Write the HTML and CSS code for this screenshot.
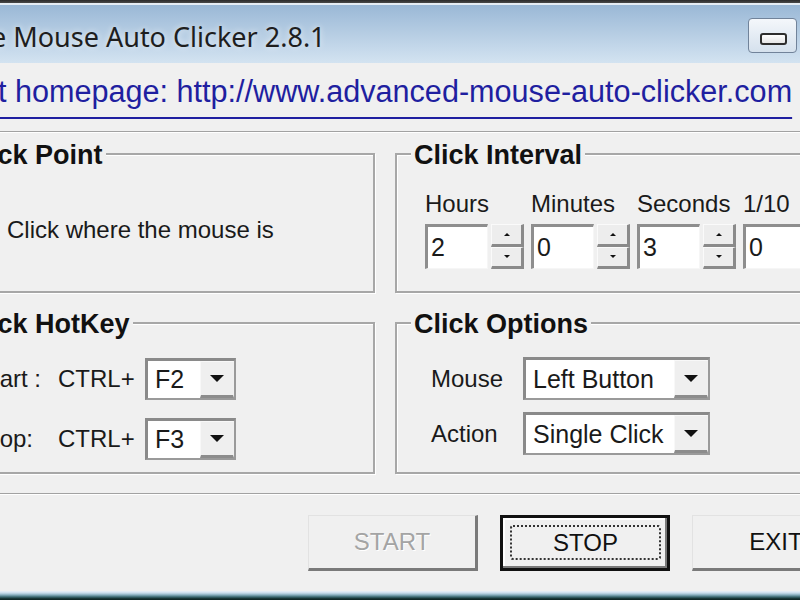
FILE: index.html
```html
<!DOCTYPE html>
<html>
<head>
<meta charset="utf-8">
<title>Advanced Mouse Auto Clicker 2.8.1</title>
<link rel="stylesheet" href="styles.css">
</head>
<body>
<div class="window">
  <div class="frame-top"></div>
  <div class="titlebar">
    <div class="title">e Mouse Auto Clicker 2.8.1</div>
    <div class="controls">
      <div class="cbtn min"><span class="min-glyph"></span></div>
      <div class="cbtn max"><span class="max-glyph"></span></div>
      <div class="cbtn close"><span class="close-glyph">✕</span></div>
    </div>
  </div>
  <div class="linkbar">
    <a class="homelink" href="#">t homepage: http://www.advanced-mouse-auto-clicker.com</a>
  </div>
  <div class="sep"></div>

  <div class="groups">
    <div class="group g-point">
      <div class="group-title">Click Point</div>
      <div class="option">Click where the mouse is</div>
    </div>

    <div class="group g-interval">
      <div class="group-title">Click Interval</div>
      <div class="spin-cols">
        <div class="spin-col">
          <div class="lbl">Hours</div>
          <div class="spin-row">
            <div class="num">2</div>
            <div class="spin"><div class="sbtn"><span class="up"></span></div><div class="sbtn"><span class="down"></span></div></div>
          </div>
        </div>
        <div class="spin-col">
          <div class="lbl">Minutes</div>
          <div class="spin-row">
            <div class="num">0</div>
            <div class="spin"><div class="sbtn"><span class="up"></span></div><div class="sbtn"><span class="down"></span></div></div>
          </div>
        </div>
        <div class="spin-col">
          <div class="lbl">Seconds</div>
          <div class="spin-row">
            <div class="num">3</div>
            <div class="spin"><div class="sbtn"><span class="up"></span></div><div class="sbtn"><span class="down"></span></div></div>
          </div>
        </div>
        <div class="spin-col">
          <div class="lbl">1/10</div>
          <div class="spin-row">
            <div class="num">0</div>
            <div class="spin"><div class="sbtn"><span class="up"></span></div><div class="sbtn"><span class="down"></span></div></div>
          </div>
        </div>
      </div>
    </div>

    <div class="group g-hotkey">
      <div class="group-title">Click HotKey</div>
      <div class="hk-row first">
        <span class="hk-lbl">Start :</span>
        <span class="hk-ctrl">CTRL+</span>
        <div class="combo small"><span class="combo-val">F2</span><span class="combo-btn"><span class="tri"></span></span></div>
      </div>
      <div class="hk-row second">
        <span class="hk-lbl">Stop:</span>
        <span class="hk-ctrl">CTRL+</span>
        <div class="combo small"><span class="combo-val">F3</span><span class="combo-btn"><span class="tri"></span></span></div>
      </div>
    </div>

    <div class="group g-options">
      <div class="group-title">Click Options</div>
      <div class="op-row first">
        <span class="op-lbl">Mouse</span>
        <div class="combo wide"><span class="combo-val">Left Button</span><span class="combo-btn"><span class="tri"></span></span></div>
      </div>
      <div class="op-row second">
        <span class="op-lbl">Action</span>
        <div class="combo wide"><span class="combo-val">Single Click</span><span class="combo-btn"><span class="tri"></span></span></div>
      </div>
    </div>
  </div>

  <div class="sep sep2"></div>

  <div class="buttons">
    <div class="btn disabled">START</div>
    <div class="btn default"><span class="focus">STOP</span></div>
    <div class="btn">EXIT</div>
  </div>

  <div class="frame-bottom"></div>
</div>
</body>
</html>
```

FILE: styles.css
```css
html, body {
  margin: 0;
  padding: 0;
}
body {
  width: 800px;
  height: 600px;
  overflow: hidden;
  background: #f0f0f0;
  font-family: "Liberation Sans", Arial, sans-serif;
  color: #111;
}
.window {
  width: 1000px;
  height: 600px;
  margin-left: -56px;
  display: flex;
  flex-direction: column;
  background: #f0f0f0;
}
.frame-top {
  height: 3px;
  background: linear-gradient(#2a2a2a, #4a4a4a);
}
.titlebar {
  height: 60px;
  box-sizing: border-box;
  border-top: 2px solid #e6edf4;
  background: linear-gradient(#9ab8d6, #d3e3f1);
  display: flex;
  align-items: flex-start;
  padding-right: 6px;
}
.title {
  flex: 1;
  padding: 14px 0 0 47px;
  font-family: "Noto Sans", "Open Sans", sans-serif;
  font-size: 27px;
  line-height: 36px;
  color: #1e1e1e;
  text-shadow: 0 0 6px rgba(255, 255, 255, 0.7);
  white-space: nowrap;
}
.controls {
  display: flex;
  gap: 6px;
  margin-top: 13px;
}
.cbtn {
  width: 49px;
  height: 35px;
  box-sizing: border-box;
  border: 1px solid #71839a;
  border-radius: 4px;
  background: linear-gradient(#f4f7fb, #d5e1ed);
  display: flex;
  align-items: center;
  justify-content: center;
}
.min {
  padding-top: 7px;
  padding-left: 2px;
}
.min-glyph {
  width: 27px;
  height: 12px;
  box-sizing: border-box;
  border: 2px solid #2e2e2e;
  border-radius: 3px;
  background: linear-gradient(#ffffff, #e6e6e6);
}
.max-glyph {
  width: 20px;
  height: 16px;
  box-sizing: border-box;
  border: 2px solid #2e2e2e;
  border-top-width: 4px;
  background: #fff;
}
.close {
  width: 80px;
  background: linear-gradient(#e8a193, #c8452f);
  color: #fff;
  font-size: 20px;
}
.linkbar {
  height: 68px;
  box-sizing: border-box;
  padding: 11px 0 0 54px;
}
.homelink {
  font-size: 30.6px;
  line-height: 34px;
  color: #1f1fa0;
  text-decoration: underline;
  text-decoration-thickness: 2px;
  text-underline-offset: 15px;
  white-space: nowrap;
}
.sep {
  height: 2px;
  box-sizing: border-box;
  border-top: 1px solid #a2a2a2;
  border-bottom: 1px solid #ffffff;
}
.groups {
  display: grid;
  grid-template-columns: 431px 431px;
  grid-template-rows: 140px 152px;
  column-gap: 20px;
  row-gap: 29px;
  margin-top: 20px;
}
.group {
  box-sizing: border-box;
  border: 2px solid #a7a7a7;
  box-shadow: 1px 1px 0 #ffffff, inset 1px 1px 0 #ffffff;
  display: flex;
  flex-direction: column;
  align-items: flex-start;
}
.group-title {
  margin: -15px 0 0 14px;
  padding: 0 3px;
  background: #f0f0f0;
  font-size: 27px;
  line-height: 30px;
  font-weight: bold;
  color: #111;
  white-space: nowrap;
}
.option {
  margin: 46px 0 0 61px;
  font-size: 24px;
  line-height: 28px;
  color: #1a1a1a;
}
.spin-cols {
  display: flex;
  gap: 7px;
  margin: 20px 0 0 28px;
}
.spin-col {
  width: 99px;
  display: flex;
  flex-direction: column;
}
.lbl {
  font-size: 24px;
  line-height: 28px;
  color: #1a1a1a;
  white-space: nowrap;
}
.spin-row {
  display: flex;
  margin-top: 6px;
  height: 45px;
}
.num {
  width: 63px;
  box-sizing: border-box;
  border-style: solid;
  border-width: 3px 1px 1px 3px;
  border-color: #8e8e8e #f6f6f6 #f6f6f6 #8e8e8e;
  background: #ffffff;
  font-size: 25px;
  padding-left: 3px;
  display: flex;
  align-items: center;
  color: #1a1a1a;
}
.spin {
  width: 33px;
  margin-left: 3px;
  display: flex;
  flex-direction: column;
}
.sbtn {
  flex: 1;
  box-sizing: border-box;
  border-style: solid;
  border-width: 1px 3px 3px 1px;
  border-color: #fafafa #8a8a8a #8a8a8a #fafafa;
  background: #ededed;
  display: flex;
  align-items: center;
  justify-content: center;
}
.up {
  width: 0;
  height: 0;
  border-left: 3px solid transparent;
  border-right: 3px solid transparent;
  border-bottom: 3px solid #111;
}
.down {
  width: 0;
  height: 0;
  border-left: 3px solid transparent;
  border-right: 3px solid transparent;
  border-top: 3px solid #111;
}
.hk-row {
  display: flex;
  align-items: center;
  height: 42px;
  padding-left: 31px;
}
.hk-row.first {
  margin-top: 19px;
}
.hk-row.second {
  margin-top: 18px;
}
.hk-lbl {
  width: 81px;
  font-size: 24px;
  color: #1a1a1a;
  white-space: nowrap;
}
.hk-ctrl {
  width: 87px;
  font-size: 24px;
  color: #1a1a1a;
}
.op-row {
  display: flex;
  align-items: center;
  height: 43px;
  padding-left: 34px;
}
.op-row.first {
  margin-top: 18px;
}
.op-row.second {
  margin-top: 12px;
}
.op-lbl {
  width: 92px;
  font-size: 24px;
  color: #1a1a1a;
}
.combo {
  height: 100%;
  box-sizing: border-box;
  display: flex;
  border-style: solid;
  border-width: 3px 2px 2px 3px;
  border-color: #8a8a8a #9a9a9a #9a9a9a #8a8a8a;
  background: #ffffff;
}
.combo.small {
  width: 91px;
}
.combo.wide {
  width: 187px;
}
.combo-val {
  flex: 1;
  padding-left: 7px;
  display: flex;
  align-items: center;
  font-size: 25px;
  color: #1a1a1a;
  white-space: nowrap;
}
.combo-btn {
  width: 34px;
  box-sizing: border-box;
  border-style: solid;
  border-width: 1px 1px 3px 1px;
  border-color: #f8f8f8 #f0f0f0 #8c8c8c #f8f8f8;
  background: #efefef;
  display: flex;
  align-items: center;
  justify-content: center;
}
.tri {
  width: 0;
  height: 0;
  border-left: 7px solid transparent;
  border-right: 7px solid transparent;
  border-top: 7px solid #111;
}
.sep2 {
  margin-top: 19px;
}
.buttons {
  display: flex;
  gap: 22px;
  margin-top: 20px;
  padding-left: 364px;
}
.btn {
  width: 170px;
  height: 56px;
  box-sizing: border-box;
  border-style: solid;
  border-width: 1px 3px 3px 1px;
  border-color: #e2e2e2 #7a7a7a #7a7a7a #e2e2e2;
  background: #f0f0f0;
  display: flex;
  align-items: center;
  justify-content: center;
  font-size: 24px;
  color: #111;
}
.btn.disabled {
  color: #a4a4a4;
  text-shadow: 1px 1px 0 #ffffff;
}
.btn.default {
  border: 3px solid #111;
  box-shadow: inset -2px -2px 0 #7a7a7a, inset 2px 2px 0 #ffffff;
  padding: 7px 6px 8px 7px;
}
.focus {
  flex: 1;
  align-self: stretch;
  box-sizing: border-box;
  border: 2px dotted #333;
  border-radius: 3px;
  display: flex;
  align-items: center;
  justify-content: center;
}
.frame-bottom {
  margin-top: auto;
  height: 9px;
  background: linear-gradient(#e9f0f8 0%, #c8dceb 22%, #86adbd 44%, #3b6870 66%, #143232 85%, #0b2020 100%);
}
```
